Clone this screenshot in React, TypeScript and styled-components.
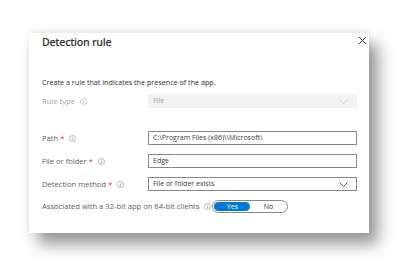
import React from "react";
import styled, { createGlobalStyle } from "styled-components";

const Global = createGlobalStyle`
  html, body { margin: 0; padding: 0; background: #ffffff; }
  body { font-family: "Open Sans", "Noto Sans", sans-serif; }
`;

const Page = styled.div`
  width: 406px;
  height: 270px;
  padding: 33px 0 0 29px;
  box-sizing: border-box;
  background: #fff;
`;

const Card = styled.div`
  position: relative;
  width: 340px;
  height: 200px;
  box-sizing: border-box;
  padding: 1px 12px 0 13px;
  background: #fff;
  box-shadow: 9px 11px 15px rgba(0, 0, 0, 0.42), 0 -2px 6px rgba(0, 0, 0, 0.08);
  display: flex;
  flex-direction: column;
`;

const Title = styled.div`
  font-size: 10.6px;
  line-height: 16px;
  font-weight: 600;
  color: #323130;
  letter-spacing: -0.25px;
`;

const Close = styled.div`
  position: absolute;
  top: 3px;
  right: 2px;
  width: 9px;
  height: 9px;
  display: flex;
`;

const Desc = styled.div`
  margin-top: 27px;
  font-size: 7.2px;
  line-height: 10px;
  color: #323130;
`;

const Form = styled.div`
  display: flex;
  flex-direction: column;
`;

const Row = styled.div<{ $mt: number }>`
  display: grid;
  grid-template-columns: 106px 209px;
  align-items: center;
  height: 14px;
  margin-top: ${(p) => p.$mt}px;
`;

const Label = styled.div<{ $disabled?: boolean }>`
  display: flex;
  align-items: center;
  font-size: 7.6px;
  line-height: 10px;
  color: ${(p) => (p.$disabled ? "#a19f9d" : "#605e5c")};
  white-space: nowrap;
`;

const Star = styled.span`
  color: #d13438;
  margin-left: 2px;
`;

const Info = styled.svg`
  margin-left: 5px;
  flex: none;
`;

const Field = styled.div<{ $disabled?: boolean }>`
  height: 14px;
  box-sizing: border-box;
  border: 1px solid ${(p) => (p.$disabled ? "#f3f2f1" : "#8a8886")};
  background: ${(p) => (p.$disabled ? "#f3f2f1" : "#fff")};
  color: ${(p) => (p.$disabled ? "#a19f9d" : "#3b3a39")};
  font-size: 7px;
  line-height: 12px;
  padding: 0 8px 0 4px;
  display: flex;
  align-items: center;
  justify-content: space-between;
  white-space: nowrap;
`;

const ToggleRow = styled.div`
  display: flex;
  align-items: center;
  margin-top: 8px;
  height: 14px;
`;

const Toggle = styled.div`
  display: flex;
  width: 76px;
  height: 13px;
  box-sizing: border-box;
  border: 1px solid #8a8886;
  border-radius: 7px;
  padding: 1px;
  margin-left: 1px;
`;

const Opt = styled.div<{ $on?: boolean }>`
  flex: ${(p) => (p.$on ? "0 0 36px" : "1")};
  border-radius: 6px;
  background: ${(p) => (p.$on ? "#0078d4" : "transparent")};
  color: ${(p) => (p.$on ? "#fff" : "#323130")};
  font-size: 7px;
  line-height: 9px;
  text-align: center;
`;

const InfoIcon = ({ color = "#8a8886" }: { color?: string }) => (
  <Info width="7" height="7" viewBox="0 0 14 14">
    <circle cx="7" cy="7" r="6" fill="none" stroke={color} strokeWidth="1.2" />
    <line x1="7" y1="6" x2="7" y2="10.5" stroke={color} strokeWidth="1.3" />
    <circle cx="7" cy="4" r="0.9" fill={color} />
  </Info>
);

const Chevron = ({ color }: { color: string }) => (
  <svg width="9" height="5" viewBox="0 0 18 10">
    <polyline points="1,1 9,9 17,1" fill="none" stroke={color} strokeWidth="1.6" />
  </svg>
);

export default function App() {
  return (
    <>
      <Global />
      <Page>
        <Card>
          <Title>Detection rule</Title>
          <Close>
            <svg width="9" height="9" viewBox="0 0 10 10">
              <path d="M1 1 L9 9 M9 1 L1 9" stroke="#323130" strokeWidth="1.1" />
            </svg>
          </Close>
          <Desc>Create a rule that indicates the presence of the app.</Desc>
          <Form>
            <Row $mt={7}>
              <Label $disabled>
                Rule type
                <InfoIcon color="#b3b0ad" />
              </Label>
              <Field $disabled>
                File
                <Chevron color="#c8c6c4" />
              </Field>
            </Row>
            <Row $mt={23}>
              <Label>
                Path<Star>*</Star>
                <InfoIcon />
              </Label>
              <Field>C:\Program Files (x86)\\Microsoft\</Field>
            </Row>
            <Row $mt={9}>
              <Label>
                File or folder<Star>*</Star>
                <InfoIcon />
              </Label>
              <Field>Edge</Field>
            </Row>
            <Row $mt={9}>
              <Label>
                Detection method<Star>*</Star>
                <InfoIcon />
              </Label>
              <Field>
                File or folder exists
                <Chevron color="#323130" />
              </Field>
            </Row>
            <ToggleRow>
              <Label>
                Associated with a 32-bit app on 64-bit clients
                <InfoIcon />
              </Label>
              <Toggle>
                <Opt $on>Yes</Opt>
                <Opt>No</Opt>
              </Toggle>
            </ToggleRow>
          </Form>
        </Card>
      </Page>
    </>
  );
}
